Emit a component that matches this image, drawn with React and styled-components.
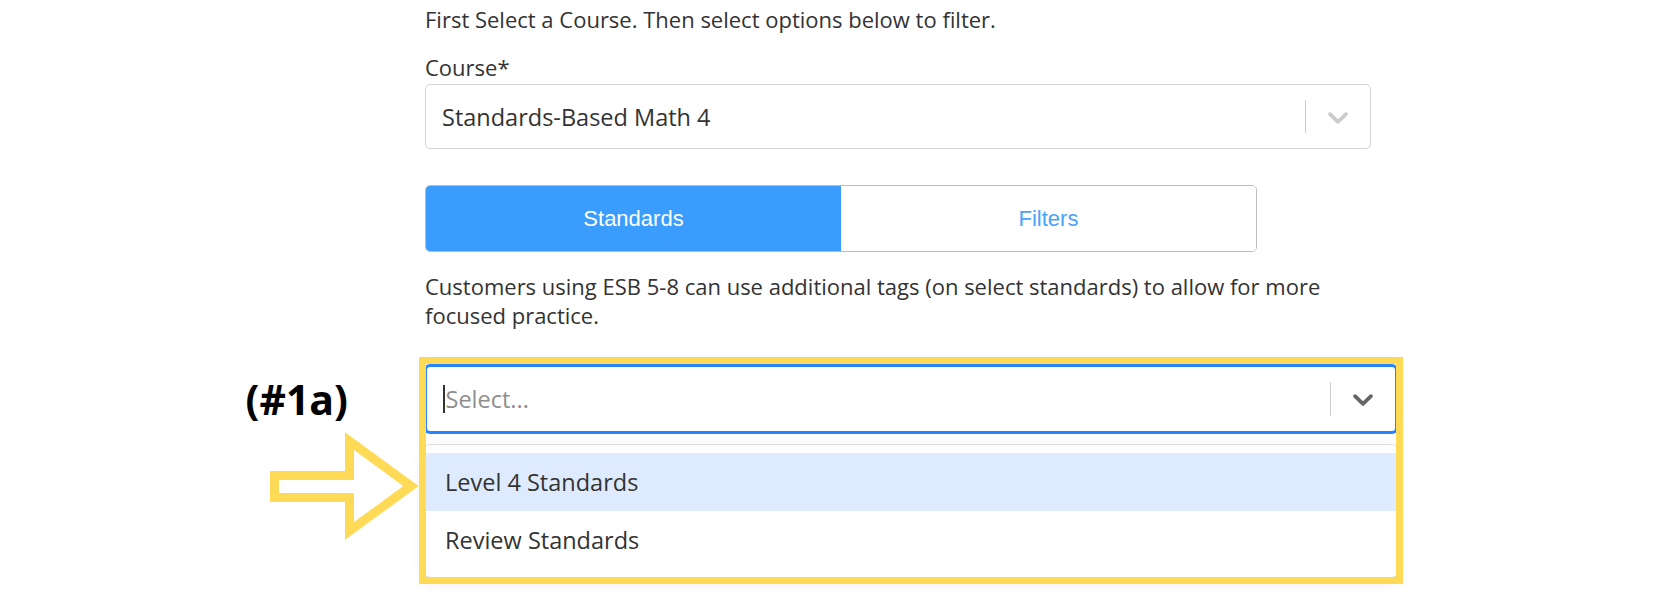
import React from 'react';
import styled, { createGlobalStyle } from 'styled-components';

const GlobalStyle = createGlobalStyle`
  body {
    margin: 0;
    background: #ffffff;
    font-family: "Open Sans", "Noto Sans", sans-serif;
    color: #333333;
  }
`;

const Page = styled.main`
  padding: 6px 0 0 425px;
  height: 600px;
  box-sizing: border-box;
  overflow: hidden;
`;

const Column = styled.div`
  width: 972px;
  display: flex;
  flex-direction: column;
`;

const Intro = styled.p`
  margin: 0;
  font-size: 22px;
  line-height: 26px;
  color: #333333;
`;

const Label = styled.label`
  margin: 21px 0 3px;
  font-size: 22px;
  line-height: 28px;
  color: #333333;
`;

const Control = styled.div`
  box-sizing: border-box;
  width: ${(p) => p.$width};
  height: ${(p) => p.$height};
  display: flex;
  align-items: center;
  border: ${(p) => (p.$focused ? '2px solid #2684ff' : '1.5px solid #d4d4d4')};
  border-radius: 5px;
  background: #ffffff;
  box-shadow: ${(p) => (p.$focused ? '0 0 0 1px #2684ff' : 'none')};
`;

const ValueArea = styled.div`
  flex: 1;
  display: flex;
  align-items: center;
  padding-left: 16px;
  font-size: 23.5px;
  color: ${(p) => (p.$placeholder ? '#8f8f8f' : '#333333')};
`;

const Caret = styled.span`
  display: inline-block;
  width: 1.5px;
  height: 28px;
  margin-right: 1px;
  background: #333333;
`;

const Separator = styled.span`
  align-self: stretch;
  width: 1.5px;
  margin: 15px 0;
  background: #cccccc;
`;

const Indicator = styled.div`
  width: 64px;
  display: flex;
  justify-content: center;
  color: ${(p) => (p.$focused ? '#666666' : '#cccccc')};
`;

const Chevron = () => (
  <svg width="34" height="34" viewBox="0 0 20 20" fill="currentColor" aria-hidden="true">
    <path d="M4.516 7.548c0.436-0.446 1.043-0.481 1.576 0l3.908 3.747 3.908-3.747c0.533-0.481 1.141-0.446 1.574 0 0.436 0.445 0.408 1.197 0 1.615-0.406 0.418-4.695 4.502-4.695 4.502-0.217 0.223-0.502 0.335-0.787 0.335s-0.57-0.112-0.789-0.335c0 0-4.287-4.084-4.695-4.502s-0.436-1.17 0-1.615z" />
  </svg>
);

const TabGroup = styled.div`
  margin-top: 36px;
  width: 832px;
  height: 67px;
  box-sizing: border-box;
  display: grid;
  grid-template-columns: 1fr 1fr;
  border: 1.5px solid #bdbdbd;
  border-radius: 5px;
  overflow: hidden;
`;

const Tab = styled.button`
  border: none;
  margin: 0;
  font-family: "Liberation Sans", Arial, sans-serif;
  font-size: 22px;
  background: ${(p) => (p.$active ? '#3a9cfd' : '#ffffff')};
  color: ${(p) => (p.$active ? '#ffffff' : '#4aa3fb')};
  cursor: pointer;
`;

const Note = styled.p`
  margin: 20px 0 0;
  width: 930px;
  font-size: 22px;
  line-height: 29px;
  color: #333333;
`;

const Callout = styled.div`
  position: relative;
  margin-top: 35px;
  width: 972px;
`;

const Menu = styled.div`
  margin-top: 12px;
  padding: 8px 0;
  border-radius: 5px;
  background: #ffffff;
  box-shadow: 0 0 0 1px rgba(0, 0, 0, 0.1), 0 4px 14px rgba(0, 0, 0, 0.12);
`;

const Option = styled.div`
  height: 58px;
  display: flex;
  align-items: center;
  padding-left: 20px;
  font-size: 23.5px;
  color: #333333;
  background: ${(p) => (p.$highlighted ? '#deebff' : 'transparent')};
`;

const Frame = styled.div`
  position: absolute;
  left: -6px;
  top: -8px;
  width: 984px;
  height: 227px;
  box-sizing: border-box;
  border: 7px solid #ffda57;
  pointer-events: none;
`;

const Tag = styled.span`
  position: absolute;
  right: calc(100% + 77px);
  top: 8px;
  font-family: "Open Sans", sans-serif;
  font-weight: 700;
  font-size: 41px;
  line-height: 52px;
  color: #000000;
  white-space: nowrap;
`;

const Arrow = styled.svg`
  position: absolute;
  left: -160px;
  top: 64px;
`;

const options = ['Level 4 Standards', 'Review Standards'];

const App = () => {
  return (
    <Page>
      <GlobalStyle />
      <Column>
        <Intro>First Select a Course. Then select options below to filter.</Intro>
        <Label>Course*</Label>
        <Control $width="946px" $height="65px">
          <ValueArea>Standards-Based Math 4</ValueArea>
          <Separator />
          <Indicator>
            <Chevron />
          </Indicator>
        </Control>

        <TabGroup>
          <Tab $active>Standards</Tab>
          <Tab>Filters</Tab>
        </TabGroup>

        <Note>
          Customers using ESB 5-8 can use additional tags (on select standards) to allow for more
          focused practice.
        </Note>

        <Callout>
          <Control $width="972px" $height="68px" $focused>
            <ValueArea $placeholder>
              <Caret />
              Select...
            </ValueArea>
            <Separator />
            <Indicator $focused>
              <Chevron />
            </Indicator>
          </Control>
          <Menu>
            {options.map((o, i) => (
              <Option key={o} $highlighted={i === 0}>{o}</Option>
            ))}
          </Menu>
          <Frame />
          <Tag>(#1a)</Tag>
          <Arrow width="160" height="120" viewBox="0 0 160 120" aria-hidden="true">
            <polygon
              points="9.5,46.5 84.5,46.5 84.5,12 146,57 84.5,102 84.5,68.5 9.5,68.5"
              fill="none"
              stroke="#ffda57"
              strokeWidth="9"
              strokeLinejoin="miter"
            />
          </Arrow>
        </Callout>
      </Column>
    </Page>
  );
};

export default App;
